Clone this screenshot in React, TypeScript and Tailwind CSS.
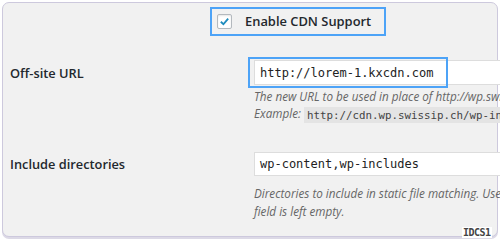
import React from "react";

const sans = { fontFamily: '"Open Sans", "Noto Sans", sans-serif' };

export default function App() {
  return (
    <div className="relative w-[500px] h-[240px] bg-white p-[2px] overflow-hidden" style={sans}>
      {/* Framed settings panel */}
      <div className="relative h-[235px] w-[496px] rounded-[7px] border border-[#cdc9dd] bg-[#f1f1f1] shadow-[0_2px_0_#dcd9e6]">
        {/* Enable CDN row */}
        <div className="ml-[207px] mt-[4px] flex h-[29px] w-[176px] items-center border-2 border-[#4da3f7] pl-[5px]">
          <span className="flex h-[15px] w-[15px] items-center justify-center rounded-[2px] border border-[#b4b9be] bg-white shadow-[inset_0_1px_2px_rgba(0,0,0,0.1)]">
            <svg width="11" height="11" viewBox="0 0 12 12">
              <path d="M2 6.3 L4.8 9 L10 2.8" fill="none" stroke="#1e8cbe" strokeWidth="2" />
            </svg>
          </span>
          <span className="ml-[13px] text-[12.9px] font-semibold text-[#23282d]">Enable CDN Support</span>
        </div>

        {/* Off-site URL row */}
        <div className="mt-[24px] flex">
          <div className="w-[251px] shrink-0 pl-[7px] pt-[4px] text-[12.8px] leading-[18px] font-semibold text-[#23282d]">
            Off-site URL
          </div>
          <div className="relative w-[600px] shrink-0">
            <div className="flex h-[25px] w-[400px] items-center border border-[#dddddd] bg-white pl-[5px] font-['DejaVu_Sans_Mono',monospace] text-[12px] text-[#222]">
              http://lorem-1.kxcdn.com
            </div>
            <div className="pointer-events-none absolute left-[-6px] top-[-3px] h-[31px] w-[200px] border-2 border-[#4da3f7]" />
            <p className="mt-[3px] whitespace-nowrap text-[11.7px] italic leading-[17px] text-[#666]">
              The new URL to be used in place of http://wp.swissip.ch for serving static files.
            </p>
            <p className="whitespace-nowrap text-[11.7px] italic leading-[17px] text-[#666]">
              Example:{" "}
              <code className="bg-[#e4e4e4] px-[3px] py-[1.5px] font-['DejaVu_Sans_Mono',monospace] text-[10.8px] not-italic text-[#444]">
                http://cdn.wp.swissip.ch/wp-includes
              </code>
            </p>
          </div>
        </div>

        {/* Include directories row */}
        <div className="mt-[29px] flex">
          <div className="w-[251px] shrink-0 pl-[7px] pt-[3px] text-[12.8px] leading-[18px] font-semibold text-[#23282d]">
            Include directories
          </div>
          <div className="w-[600px] shrink-0">
            <div className="flex h-[24px] w-[400px] items-center border border-[#dddddd] bg-white pl-[5px] font-['DejaVu_Sans_Mono',monospace] text-[12px] text-[#222]">
              wp-content,wp-includes
            </div>
            <p className="mt-[8px] text-[11.7px] italic leading-[18px] text-[#666]">
              <span className="block whitespace-nowrap">
                Directories to include in static file matching. Use a comma as the delimiter. Default is wp-content, wp-includes, which will be enforced if this
              </span>
              <span className="block whitespace-nowrap">field is left empty.</span>
            </p>
          </div>
        </div>
      </div>
      <div className="absolute left-[462px] top-[227px] bg-white px-[1px] font-['DejaVu_Sans_Mono',monospace] text-[10px] font-bold leading-[11px] tracking-[-0.5px] text-[#444]">
        IDCS1
      </div>
    </div>
  );
}
